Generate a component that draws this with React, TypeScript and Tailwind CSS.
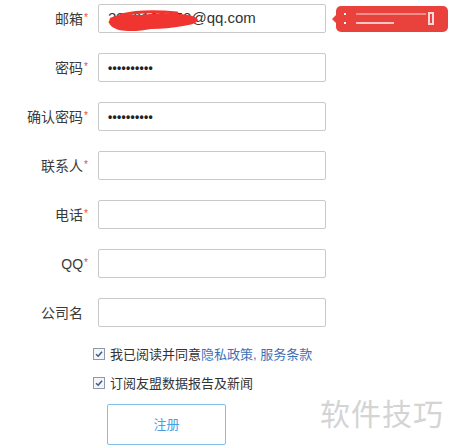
const fields = [
	{ label: '邮箱', required: true, value: 'email' },
	{ label: '密码', required: true, value: 'pw' },
	{ label: '确认密码', required: true, value: 'pw' },
	{ label: '联系人', required: true, value: '' },
	{ label: '电话', required: true, value: '' },
	{ label: 'QQ', required: true, value: '' },
	{ label: '公司名', required: false, value: '' },
]

const Check = () => (
	<span className="w-[12px] h-[12px] border border-[#8f9aa8] bg-[#f3f5f8] flex items-center justify-center shrink-0">
		<svg viewBox="0 0 12 12" className="w-[10px] h-[10px]">
			<path d="M2.5 6.2 L5 8.6 L9.6 3.2" fill="none" stroke="#3b5a86" strokeWidth={1.8} />
		</svg>
	</span>
)

const App = () => {
	return (
		<div
			className="relative w-[450px] h-[446px] bg-white overflow-hidden text-[#333]"
			style={{ fontFamily: '"Liberation Sans", "Noto Sans CJK SC", sans-serif' }}
		>
			{/* Form rows */}
			<div className="flex flex-col gap-[20px] pt-[4px]">
				{fields.map((f, i) => (
					<div key={i} className="flex items-center h-[29px]">
						<div className="w-[88px] flex justify-end items-start text-[14px] leading-none text-[#3a3a3a]">
							<span>{f.label}</span>
							<span className="text-[#e84c3d] text-[10px] mt-[1px] ml-[1px]">{f.required ? '*' : ''}</span>
							{!f.required && <span className="w-[4px]" />}
						</div>
						<div className="relative ml-[10px] w-[228px] h-[29px] border border-[#c9c9c9] rounded-[2px] bg-white flex items-center px-[9px]">
							{f.value === 'email' && (
								<>
									<span className="text-[15px] text-[#333]">2970123450@qq.com</span>
									<svg className="absolute left-[8px] top-[4px]" width="96" height="24" viewBox="0 0 96 24">
										<path d="M3 9 C10 5 22 5 34 6 C48 4 62 4 74 5 C84 6 90 8 91 11 C90 14 84 16 76 17 C66 19 54 20 44 20 C34 22 22 23 12 21 C6 19 2 16 2 13 Z" fill="#f0342f" />
										<path d="M14 6 C30 2 50 2 70 4" stroke="#f0342f" strokeWidth={3} fill="none" strokeLinecap="round" />
									</svg>
								</>
							)}
							{f.value === 'pw' && (
								<span className="text-[12px] tracking-[0.3px] text-[#222] font-bold">••••••••••</span>
							)}
						</div>
						{i === 0 && (
							<div className="relative ml-[10px] w-[112px] h-[26px] bg-[#e9423d] rounded-[5px]">
								<span className="absolute -left-[4px] top-[9px] w-0 h-0 border-y-[4px] border-y-transparent border-r-[4px] border-r-[#e9423d]" />
								<div className="absolute left-[8px] top-[7px] w-[2px] h-[2px] bg-white" />
								<div className="absolute left-[20px] top-[7px] w-[70px] h-[2px] bg-white/40" />
								<div className="absolute left-[8px] top-[16px] w-[2px] h-[2px] bg-white" />
								<div className="absolute left-[20px] top-[16px] w-[38px] h-[2px] bg-white/70" />
								<div className="absolute left-[92px] top-[6px] w-[6px] h-[13px] border-2 border-white/80" />
							</div>
						)}
					</div>
				))}
			</div>

			{/* Agreements */}
			<div className="flex flex-col gap-[13px] mt-[19px] ml-[93px] text-[13px] leading-none">
				<label className="flex items-center gap-[5px] h-[16px]">
					<Check />
					<span>
						我已阅读并同意<span className="text-[#3d6fb6]">隐私政策, 服务条款</span>
					</span>
				</label>
				<label className="flex items-center gap-[5px] h-[16px]">
					<Check />
					<span>订阅友盟数据报告及新闻</span>
				</label>
			</div>

			{/* Submit */}
			<button className="mt-[13px] ml-[107px] w-[119px] h-[41px] border border-[#80bfe6] rounded-[2px] bg-white text-[#4a9ee0] text-[13px]">
				注册
			</button>

			{/* Watermark */}
			<div className="absolute left-[320px] top-[392px] text-[30px] text-[#d4d4d4] tracking-[1px]">
				软件技巧
			</div>
		</div>
	)
}

export default App
